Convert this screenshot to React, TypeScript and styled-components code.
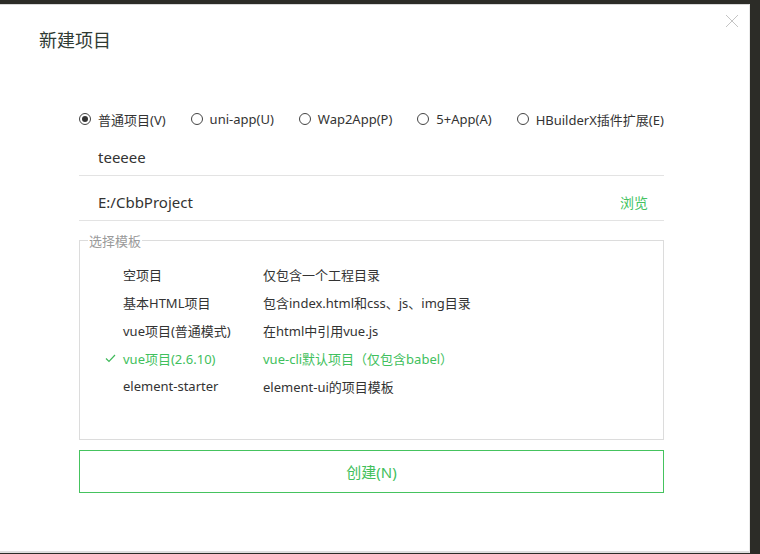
import { useState } from 'react'
import styled, { createGlobalStyle } from 'styled-components'

const GlobalStyle = createGlobalStyle`
  html, body {
    margin: 0;
    padding: 0;
    background: #2c2c27;
  }
  body {
    font-family: "Noto Sans", "Noto Sans CJK SC", sans-serif;
    color: #333;
  }
`

const projectTypes = [
  '普通项目(V)',
  'uni-app(U)',
  'Wap2App(P)',
  '5+App(A)',
  'HBuilderX插件扩展(E)',
]

const templates = [
  { name: '空项目', desc: '仅包含一个工程目录' },
  { name: '基本HTML项目', desc: '包含index.html和css、js、img目录' },
  { name: 'vue项目(普通模式)', desc: '在html中引用vue.js' },
  { name: 'vue项目(2.6.10)', desc: 'vue-cli默认项目（仅包含babel）' },
  { name: 'element-starter', desc: 'element-ui的项目模板' },
]

export default function App() {
  const [type, setType] = useState(0)
  const [template, setTemplate] = useState(3)

  return (
    <>
      <GlobalStyle />
      <Dialog>
        <Header>
          <Title>新建项目</Title>
          <CloseButton aria-label="close">
            <svg width="14" height="14" viewBox="0 0 14 14">
              <path d="M1 1L13 13M13 1L1 13" stroke="#c4c4c4" strokeWidth="1" fill="none" />
            </svg>
          </CloseButton>
        </Header>

        <Body>
          <RadioRow>
            {projectTypes.map((label, i) => (
              <RadioItem key={label} onClick={() => setType(i)}>
                <RadioCircle $checked={type === i} />
                {label}
              </RadioItem>
            ))}
          </RadioRow>

          <Field>
            <FieldText>teeeee</FieldText>
          </Field>
          <Field>
            <FieldText>E:/CbbProject</FieldText>
            <BrowseLink>浏览</BrowseLink>
          </Field>

          <TemplateSet>
            <Legend>选择模板</Legend>
            <TemplateList>
              {templates.map((t, i) => (
                <TemplateRow key={t.name} $active={template === i} onClick={() => setTemplate(i)}>
                  <CheckCell>
                    {template === i && (
                      <svg width="11" height="9" viewBox="0 0 11 9">
                        <path d="M1 4.5L4 7.5L10 1" stroke="#3fb95a" strokeWidth="1.2" fill="none" />
                      </svg>
                    )}
                  </CheckCell>
                  <span>{t.name}</span>
                  <span>{t.desc}</span>
                </TemplateRow>
              ))}
            </TemplateList>
          </TemplateSet>

          <CreateButton type="button">创建(N)</CreateButton>
        </Body>
      </Dialog>
    </>
  )
}

const Dialog = styled.div`
  box-sizing: border-box;
  width: 750px;
  height: 549px;
  margin-top: 4px;
  background: #fff;
  border-top: 1px solid #d8d8d8;
  border-bottom: 2px solid #dedede;
  border-right: 1px solid #eaeaea;
`

const Header = styled.div`
  display: flex;
  justify-content: space-between;
  align-items: flex-start;
  padding: 0 10px 0 39px;
  height: 86px;
`

const Title = styled.h1`
  margin: 21px 0 0;
  font-size: 18px;
  font-weight: 400;
  color: #2f3b33;
  font-family: "Noto Sans CJK SC", sans-serif;
`

const CloseButton = styled.button`
  margin-top: 9px;
  padding: 0;
  border: none;
  background: none;
  width: 14px;
  height: 14px;
  cursor: pointer;
`

const Body = styled.div`
  margin-left: 79px;
  width: 585px;
  display: flex;
  flex-direction: column;
`

const RadioRow = styled.div`
  display: flex;
  align-items: center;
  gap: 25px;
  height: 24px;
  margin-top: 16px;
  font-size: 13px;
  white-space: nowrap;
`

const RadioItem = styled.label`
  display: flex;
  align-items: center;
  gap: 7px;
  cursor: pointer;
`

const RadioCircle = styled.span<{ $checked: boolean }>`
  box-sizing: border-box;
  width: 12px;
  height: 12px;
  border-radius: 50%;
  border: 1.5px solid #444;
  display: flex;
  align-items: center;
  justify-content: center;

  &::after {
    content: '';
    display: ${({ $checked }) => ($checked ? 'block' : 'none')};
    width: 6px;
    height: 6px;
    border-radius: 50%;
    background: #333;
  }
`

const Field = styled.div`
  box-sizing: border-box;
  display: flex;
  align-items: flex-end;
  justify-content: space-between;
  height: 45px;
  padding: 0 16px 8px 19px;
  border-bottom: 1px solid #e3e3e3;
  font-size: 15px;
`

const FieldText = styled.span`
  color: #333;
`

const BrowseLink = styled.span`
  color: #44c35f;
  font-size: 14px;
  font-family: "Noto Sans CJK SC", sans-serif;
  cursor: pointer;
`

const TemplateSet = styled.fieldset`
  box-sizing: border-box;
  margin: 10px 0 0;
  height: 209px;
  padding: 0;
  border: 1px solid #dcdcdc;
`

const Legend = styled.legend`
  margin-left: 8px;
  padding: 0 1px;
  font-size: 13px;
  color: #9a9a9a;
  font-family: "Noto Sans CJK SC", sans-serif;
`

const TemplateList = styled.div`
  display: flex;
  flex-direction: column;
  padding: 10px 0 0 25px;
`

const TemplateRow = styled.div<{ $active: boolean }>`
  display: grid;
  grid-template-columns: 18px 140px 1fr;
  align-items: center;
  height: 28px;
  font-size: 13px;
  color: ${({ $active }) => ($active ? '#3fc05d' : '#333')};
  cursor: pointer;
`

const CheckCell = styled.span`
  display: flex;
  align-items: center;
`

const CreateButton = styled.button`
  appearance: none;
  box-sizing: border-box;
  margin-top: 10px;
  height: 43px;
  border: 1px solid #45c35e;
  border-radius: 0;
  background: #fff;
  color: #42c05c;
  font-size: 15px;
  font-family: "Noto Sans", "Noto Sans CJK SC", sans-serif;
  cursor: pointer;
`
